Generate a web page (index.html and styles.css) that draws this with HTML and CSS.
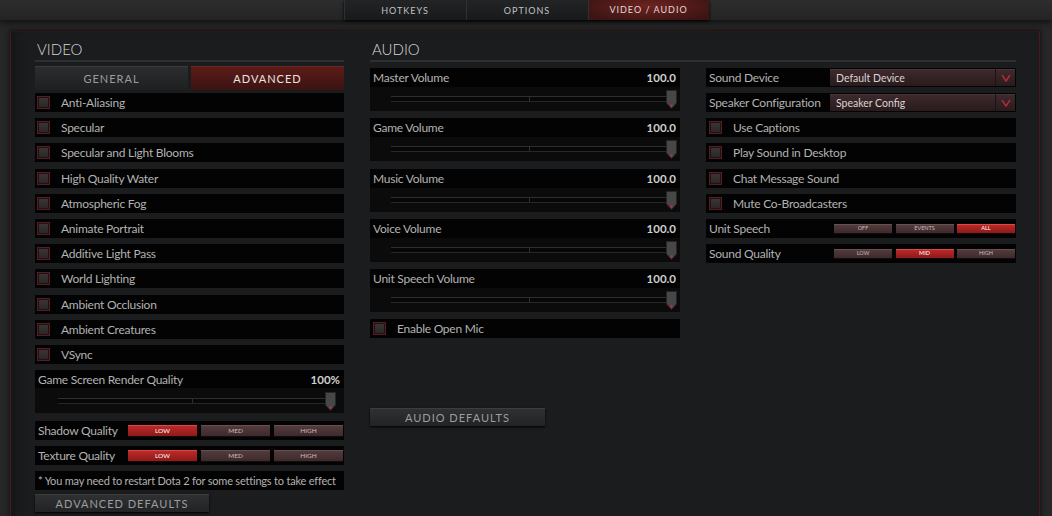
FILE: index.html
```html
<!DOCTYPE html>
<html lang="en">
<head>
   <meta charset="UTF-8">
   <meta name="viewport" content="width=device-width, initial-scale=1.0">
   <title>Settings - Video / Audio</title>
   <link rel="stylesheet" href="styles.css">
</head>
<body>
   <div class="topbar">
      <nav class="tabs">
         <a class="tab">HOTKEYS</a>
         <a class="tab">OPTIONS</a>
         <a class="tab active">VIDEO / AUDIO</a>
      </nav>
   </div>

   <div class="panel">
      <section class="video">
         <h2 class="section-title">VIDEO</h2>
         <div class="subtabs">
            <div class="subtab">GENERAL</div>
            <div class="subtab active">ADVANCED</div>
         </div>
         <div class="list">
            <label class="row"><span class="box"></span>Anti-Aliasing</label>
            <label class="row"><span class="box"></span>Specular</label>
            <label class="row"><span class="box"></span>Specular and Light Blooms</label>
            <label class="row"><span class="box"></span>High Quality Water</label>
            <label class="row"><span class="box"></span>Atmospheric Fog</label>
            <label class="row"><span class="box"></span>Animate Portrait</label>
            <label class="row"><span class="box"></span>Additive Light Pass</label>
            <label class="row"><span class="box"></span>World Lighting</label>
            <label class="row"><span class="box"></span>Ambient Occlusion</label>
            <label class="row"><span class="box"></span>Ambient Creatures</label>
            <label class="row"><span class="box"></span>VSync</label>

            <div class="slider-block render">
               <div class="slider-head"><span>Game Screen Render Quality</span><b>100%</b></div>
               <div class="slider">
                  <div class="track"></div>
                  <svg class="knob" width="11" height="19" viewBox="0 0 11 19">
                     <path d="M0.5 0.5 H10.5 V13 L5.5 18.5 L0.5 13 Z" fill="#474747" stroke="#262626"/>
                     <circle cx="5.5" cy="15.5" r="1.2" fill="#c8283a"/>
                  </svg>
               </div>
            </div>

            <div class="row choice shadow-row">
               <span class="label">Shadow Quality</span>
               <div class="seg wide"><span class="on">LOW</span><span>MED</span><span>HIGH</span></div>
            </div>
            <div class="row choice">
               <span class="label">Texture Quality</span>
               <div class="seg wide"><span class="on">LOW</span><span>MED</span><span>HIGH</span></div>
            </div>
            <div class="row note">* You may need to restart Dota 2 for some settings to take effect</div>
            <button class="defaults adv">ADVANCED DEFAULTS</button>
         </div>
      </section>

      <section class="audio">
         <h2 class="section-title">AUDIO</h2>
         <div class="audio-cols">
            <div class="col volumes">
               <div class="slider-block">
                  <div class="slider-head"><span>Master Volume</span><b>100.0</b></div>
                  <div class="slider">
                     <div class="track"></div>
                     <svg class="knob" width="11" height="19" viewBox="0 0 11 19">
                        <path d="M0.5 0.5 H10.5 V13 L5.5 18.5 L0.5 13 Z" fill="#474747" stroke="#262626"/>
                        <circle cx="5.5" cy="15.5" r="1.2" fill="#c8283a"/>
                     </svg>
                  </div>
               </div>
               <div class="slider-block">
                  <div class="slider-head"><span>Game Volume</span><b>100.0</b></div>
                  <div class="slider">
                     <div class="track"></div>
                     <svg class="knob" width="11" height="19" viewBox="0 0 11 19">
                        <path d="M0.5 0.5 H10.5 V13 L5.5 18.5 L0.5 13 Z" fill="#474747" stroke="#262626"/>
                        <circle cx="5.5" cy="15.5" r="1.2" fill="#c8283a"/>
                     </svg>
                  </div>
               </div>
               <div class="slider-block">
                  <div class="slider-head"><span>Music Volume</span><b>100.0</b></div>
                  <div class="slider">
                     <div class="track"></div>
                     <svg class="knob" width="11" height="19" viewBox="0 0 11 19">
                        <path d="M0.5 0.5 H10.5 V13 L5.5 18.5 L0.5 13 Z" fill="#474747" stroke="#262626"/>
                        <circle cx="5.5" cy="15.5" r="1.2" fill="#c8283a"/>
                     </svg>
                  </div>
               </div>
               <div class="slider-block">
                  <div class="slider-head"><span>Voice Volume</span><b>100.0</b></div>
                  <div class="slider">
                     <div class="track"></div>
                     <svg class="knob" width="11" height="19" viewBox="0 0 11 19">
                        <path d="M0.5 0.5 H10.5 V13 L5.5 18.5 L0.5 13 Z" fill="#474747" stroke="#262626"/>
                        <circle cx="5.5" cy="15.5" r="1.2" fill="#c8283a"/>
                     </svg>
                  </div>
               </div>
               <div class="slider-block">
                  <div class="slider-head"><span>Unit Speech Volume</span><b>100.0</b></div>
                  <div class="slider">
                     <div class="track"></div>
                     <svg class="knob" width="11" height="19" viewBox="0 0 11 19">
                        <path d="M0.5 0.5 H10.5 V13 L5.5 18.5 L0.5 13 Z" fill="#474747" stroke="#262626"/>
                        <circle cx="5.5" cy="15.5" r="1.2" fill="#c8283a"/>
                     </svg>
                  </div>
               </div>
               <label class="row"><span class="box"></span>Enable Open Mic</label>
               <button class="defaults audio-btn">AUDIO DEFAULTS</button>
            </div>

            <div class="col options">
               <div class="row choice">
                  <span class="label">Sound Device</span>
                  <div class="select"><span>Default Device</span><i class="arrow"><svg width="10" height="8" viewBox="0 0 10 8"><path d="M1 1 L5 7 L9 1" fill="none" stroke="#b3293c" stroke-width="1.5"/></svg></i></div>
               </div>
               <div class="row choice">
                  <span class="label">Speaker Configuration</span>
                  <div class="select"><span>Speaker Config</span><i class="arrow"><svg width="10" height="8" viewBox="0 0 10 8"><path d="M1 1 L5 7 L9 1" fill="none" stroke="#b3293c" stroke-width="1.5"/></svg></i></div>
               </div>
               <label class="row"><span class="box"></span>Use Captions</label>
               <label class="row"><span class="box"></span>Play Sound in Desktop</label>
               <label class="row"><span class="box"></span>Chat Message Sound</label>
               <label class="row"><span class="box"></span>Mute Co-Broadcasters</label>
               <div class="row choice">
                  <span class="label">Unit Speech</span>
                  <div class="seg small"><span>OFF</span><span>EVENTS</span><span class="on">ALL</span></div>
               </div>
               <div class="row choice">
                  <span class="label">Sound Quality</span>
                  <div class="seg small"><span>LOW</span><span class="on">MID</span><span>HIGH</span></div>
               </div>
            </div>
         </div>
      </section>
   </div>
</body>
</html>
```

FILE: styles.css
```css
body {
   margin: 0;
   width: 1052px;
   height: 516px;
   overflow: hidden;
   background-color: #272727;
   font-family: Lato, "Open Sans", sans-serif;
   color: #b2b2b2;
}

.topbar {
   height: 20px;
   display: flex;
   justify-content: center;
   background: linear-gradient(#2d2d2d, #242424);
   box-shadow: 0 3px 6px rgba(0, 0, 0, 0.55);
   position: relative;
}

.tabs {
   display: flex;
   box-shadow: 0 1px 3px #000;
}

.tab {
   width: 121px;
   height: 20px;
   display: flex;
   align-items: center;
   justify-content: center;
   font-size: 9px;
   letter-spacing: 1px;
   color: #c2c2c2;
   background: linear-gradient(#222426, #17191b);
   border-left: 1px solid #2e3032;
}

.tab.active {
   align-items: flex-start;
   padding-top: 4px;
   box-sizing: border-box;
   color: #e4d6d6;
   background: radial-gradient(ellipse at 50% 30%, #6d2320, #3b1413 85%);
}

.panel {
   margin: 11px 0 0 10px;
   width: 1030px;
   height: 500px;
   box-sizing: border-box;
   padding: 6px 0 0 24px;
   display: flex;
   gap: 26px;
   background-color: #1b1c1d;
   border-left: 1px solid #4a191c;
   border-right: 1px solid #4a191c;
   border-top: 1px solid #2a1819;
   box-shadow: 0 0 4px 1px #141414, inset 8px 0 12px -6px #121314;
}

.section-title {
   margin: 0;
   height: 22px;
   line-height: 22px;
   padding-left: 2px;
   font-size: 15px;
   font-weight: 300;
   color: #d6d6d6;
   border-bottom: 2px solid #2d3032;
}

.video {
   width: 309px;
}

.subtabs {
   display: flex;
   gap: 3px;
   height: 24px;
   margin: 4px 0 3px;
}

.subtab {
   flex: 1;
   display: flex;
   align-items: center;
   justify-content: center;
   font-size: 11px;
   letter-spacing: 1px;
   color: #9c9c9c;
   background: linear-gradient(#2b2d2f, #1d1f21);
   border-top: 1px solid #393b3d;
}

.subtab.active {
   color: #ece4e4;
   background: linear-gradient(#5c1c19, #3a1311);
   border-top-color: #6b2a26;
}

.list {
   display: flex;
   flex-direction: column;
   gap: 6.2px;
}

.row {
   height: 19px;
   flex-shrink: 0;
   display: flex;
   align-items: center;
   padding: 0 2px;
   font-size: 12px;
   letter-spacing: -0.25px;
   white-space: nowrap;
   background-color: #030303;
}

.box {
   width: 13px;
   height: 13px;
   box-sizing: border-box;
   margin-right: 11px;
   border: 1px solid #5a1c20;
   background: linear-gradient(#3d3637, #2a2526);
   box-shadow: inset 0 0 0 1px #1b1314;
}

.choice {
   padding: 0 1px 0 3px;
}

.choice .label {
   margin-right: auto;
}

.shadow-row {
   margin-top: 1.5px;
}

.note {
   font-size: 11px;
   letter-spacing: -0.2px;
   padding-left: 3px;
}

.slider-block {
   flex-shrink: 0;
   background-color: #0b0b0b;
}

.slider-head {
   height: 19px;
   display: flex;
   align-items: center;
   justify-content: space-between;
   padding: 0 4px 0 3px;
   font-size: 12px;
   letter-spacing: -0.25px;
   background-color: #030303;
}

.slider-head b {
   font-size: 11.5px;
   letter-spacing: 0;
   color: #d0d0d0;
}

.slider {
   height: 24px;
   display: flex;
   align-items: center;
   padding: 0 3px 0 21px;
}

.render .slider-head {
   height: 18px;
}

.render .slider {
   height: 25px;
   padding: 0 8px 0 23px;
}

.track {
   flex: 1;
   height: 4px;
   margin-right: -4px;
   background-color: #070707;
   border-top: 1px solid #2e2e2e;
   border-bottom: 1px solid #272727;
   background-image: linear-gradient(90deg, transparent calc(50% - 1px), #2e2e2e calc(50% - 1px), #2e2e2e 50%, transparent 50%);
}

.knob {
   display: block;
   flex-shrink: 0;
   margin-top: 1px;
}

.seg {
   display: flex;
}

.seg span {
   display: flex;
   align-items: center;
   justify-content: center;
   letter-spacing: 0;
   color: #cdbcbc;
   background: linear-gradient(#553c3f, #3d2a2c);
   box-shadow: inset 0 1px 0 #675052, 0 1px 0 #120c0c;
}

.seg span.on {
   color: #fff;
   background: linear-gradient(#c22a2a, #8c1a1a);
   box-shadow: inset 0 1px 0 #d84a44, 0 1px 0 #120c0c;
}

.seg.wide {
   gap: 4px;
}

.seg.wide span {
   width: 69px;
   height: 11px;
   font-size: 6.5px;
}

.seg.small {
   gap: 3.5px;
}

.seg.small span {
   width: 58px;
   height: 9px;
   font-size: 5.5px;
}

.defaults {
   flex-shrink: 0;
   height: 18px;
   padding: 0;
   font-family: inherit;
   font-size: 11px;
   letter-spacing: 1px;
   color: #9e9e9e;
   background: linear-gradient(#2e3032, #212325);
   border: none;
   border-top: 1px solid #3b3d3f;
   box-shadow: 0 1px 2px #000;
}

.defaults.adv {
   width: 174px;
   margin-top: -2px;
}

.audio {
   width: 646px;
}

.audio-cols {
   display: flex;
   gap: 26px;
   margin-top: 6px;
}

.col {
   width: 310px;
   display: flex;
   flex-direction: column;
}

.volumes {
   gap: 7.25px;
}

.volumes .row {
   padding-left: 3px;
}

.defaults.audio-btn {
   width: 175px;
   margin-top: 62px;
}

.options {
   gap: 6.15px;
}

.options .row {
   padding-left: 3px;
}

.select {
   width: 185px;
   height: 17px;
   box-sizing: border-box;
   display: flex;
   align-items: center;
   font-size: 10.5px;
   letter-spacing: 0;
   color: #dcd2d2;
   background: linear-gradient(#3e2a2d, #291b1d);
   box-shadow: inset 0 1px 0 #4b3538;
}

.select span {
   flex: 1;
   padding-left: 6px;
}

.arrow {
   width: 19px;
   height: 17px;
   display: flex;
   align-items: center;
   justify-content: center;
   border-left: 1px solid #1c1213;
}
```
